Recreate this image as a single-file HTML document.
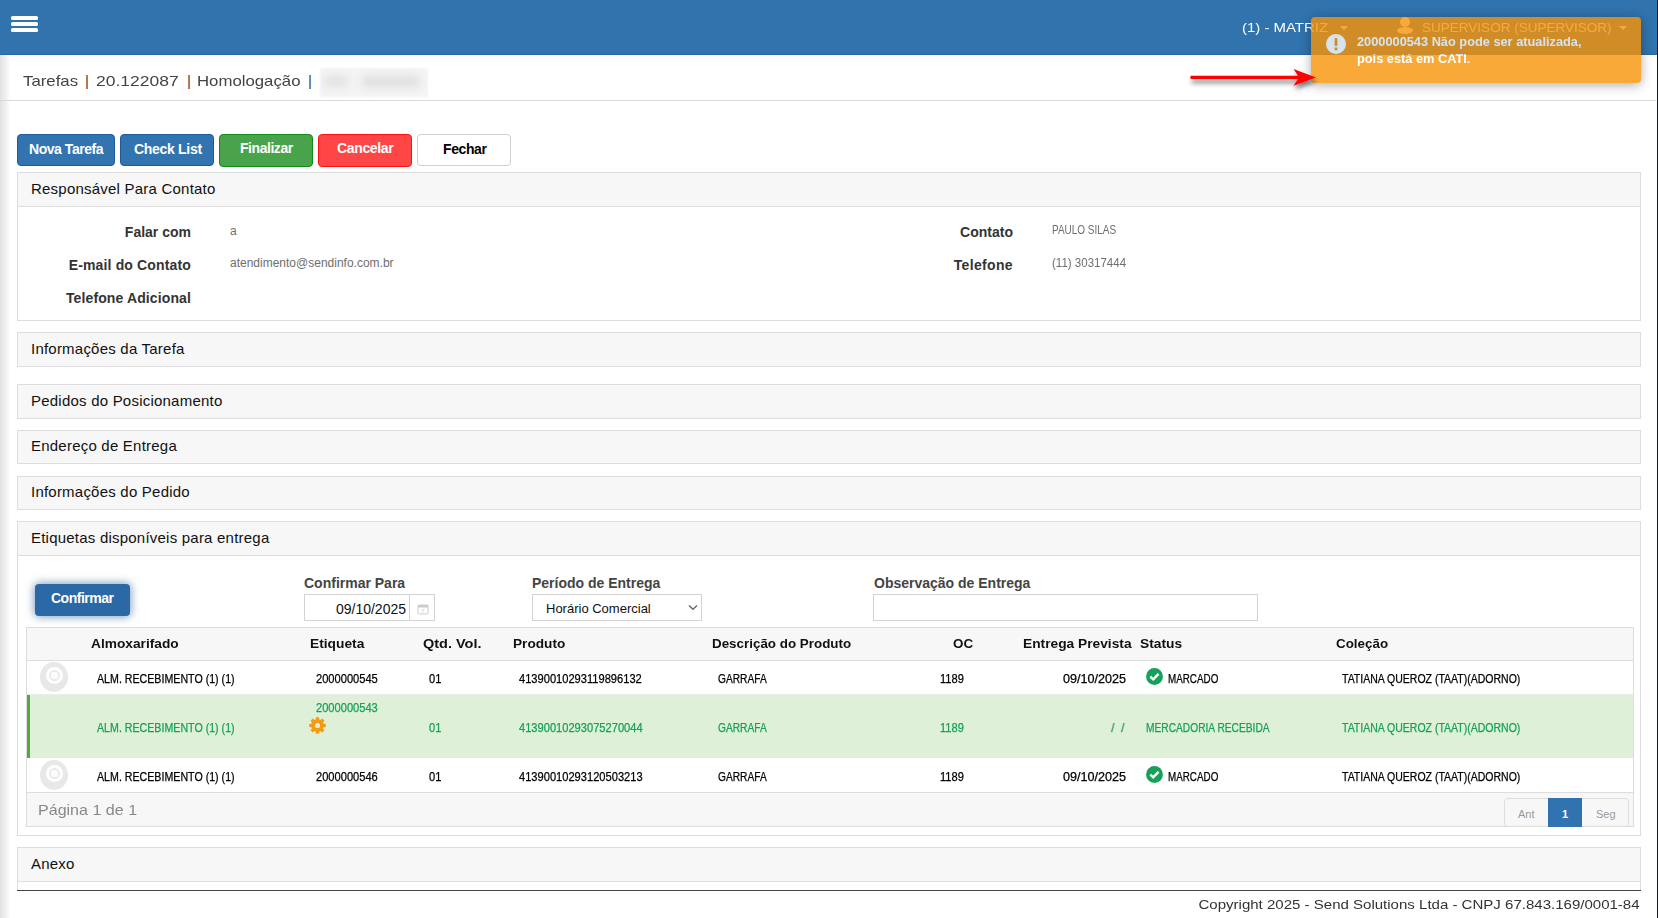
<!DOCTYPE html>
<html><head><meta charset="utf-8">
<style>
*{box-sizing:border-box;margin:0;padding:0}
html,body{width:1658px;height:918px;overflow:hidden;background:#fff;font-family:"Liberation Sans",sans-serif}
body{position:relative}
.a{position:absolute;white-space:nowrap}
.t{position:absolute;white-space:nowrap;line-height:1}
.sx{display:inline-block;transform-origin:0 0}
.sxr{display:inline-block;transform-origin:100% 0}
#hdr{left:0;top:0;width:1658px;height:55px;background:#3073ad;border-bottom:1px solid #2a66a3}
.bar{position:absolute;left:11px;width:27px;height:4px;background:#fff;border-radius:1.5px}
.btn{position:absolute;top:134px;height:32px;border-radius:4px}
.panel{position:absolute;left:17px;width:1624px;border:1px solid #ddd;background:#fff}
.ph{background:#f7f7f7;height:33px;font-size:15px;color:#111;padding-left:13px;line-height:31px;white-space:nowrap;letter-spacing:0.22px}
.lbl{font-weight:bold;font-size:14px;color:#333}
.val{font-size:12px;color:#6e6e6e}
.hd{font-weight:bold;font-size:13px;color:#111}
.td{font-size:12px;color:#000;-webkit-text-stroke:0.25px currentColor}
.gr{color:#17a05a}
.radio{position:absolute;left:40px;width:28px;height:30px;border-radius:50%;background:#e8e8e8}
.radio:before{content:"";position:absolute;left:5.5px;top:5px;width:17px;height:17px;border-radius:50%;border:3px solid #fff;box-sizing:border-box;background:#e9e9e9}
.radio:after{content:"";position:absolute;left:10.5px;top:10px;width:7px;height:7px;border-radius:2px;background:#fbfcfe}
</style></head><body>
<!-- header -->
<div id="hdr" class="a">
  <div class="bar" style="top:16px"></div>
  <div class="bar" style="top:22px"></div>
  <div class="bar" style="top:28px"></div>
  <div class="t" style="left:1242px;top:21px;font-size:13px;color:#fff"><span class="sx" style="transform:scaleX(1.15)">(1) - MATRIZ</span></div>
  <div class="a" style="left:1340px;top:26px;width:0;height:0;border-left:4px solid transparent;border-right:4px solid transparent;border-top:4px solid #fff"></div>
  <svg class="a" style="left:1396px;top:17px" width="18" height="17" viewBox="0 0 18 17"><circle cx="9" cy="5" r="5" fill="#fff"/><ellipse cx="9" cy="13.5" rx="8" ry="3.5" fill="#fff"/></svg>
  <div class="t" style="left:1422px;top:21px;font-size:13px;color:#fff"><span class="sx" style="transform:scaleX(1.04)">SUPERVISOR (SUPERVISOR)</span></div>
  <div class="a" style="left:1619px;top:26px;width:0;height:0;border-left:4px solid transparent;border-right:4px solid transparent;border-top:4px solid #fff"></div>
</div>
<div class="a" style="left:0;top:55px;width:11px;height:863px;background:linear-gradient(to right,#e2e2e2,#fff)"></div>

<!-- breadcrumb -->
<div class="t" style="left:23px;top:73px;font-size:15px;color:#444"><span class="sx" style="transform:scaleX(1.12)">Tarefas</span></div>
<div class="t" style="left:85px;top:73px;font-size:15px;color:#444">|</div>
<div class="t" style="left:96px;top:73px;font-size:15px;color:#444"><span class="sx" style="transform:scaleX(1.165)">20.122087</span></div>
<div class="t" style="left:187px;top:73px;font-size:15px;color:#444">|</div>
<div class="t" style="left:197px;top:73px;font-size:15px;color:#444"><span class="sx" style="transform:scaleX(1.118)">Homologação</span></div>
<div class="t" style="left:308px;top:73px;font-size:15px;color:#444">|</div>
<div class="a" style="left:319px;top:67px;width:110px;height:31px;overflow:hidden">
  <div class="a" style="left:1px;top:1px;width:108px;height:29px;background:#f4f4f4;filter:blur(1px)"></div>
  <div class="a" style="left:5px;top:9px;width:24px;height:11px;background:#e1e1e1;filter:blur(4px);border-radius:5px"></div>
  <div class="a" style="left:43px;top:9px;width:58px;height:11px;background:#dedede;filter:blur(4px);border-radius:5px"></div>
</div>
<div class="a" style="left:0;top:100px;width:1656px;height:1px;background:#dadada"></div>

<!-- buttons -->
<div class="btn" style="left:17px;width:98px;background:#3274b0;border:1px solid #1f5b9a"></div>
<div class="t" style="left:29px;top:142px;font-size:14px;font-weight:bold;color:#fff;letter-spacing:-0.45px">Nova Tarefa</div>
<div class="btn" style="left:120px;width:94px;background:#3274b0;border:1px solid #1f5b9a"></div>
<div class="t" style="left:134px;top:142px;font-size:14px;font-weight:bold;color:#fff;letter-spacing:-0.3px">Check List</div>
<div class="btn" style="left:219px;width:94px;height:33px;background:#48a34b;border:1px solid #128b18"></div>
<div class="t" style="left:240px;top:141px;font-size:14px;font-weight:bold;color:#fff;letter-spacing:-0.45px">Finalizar</div>
<div class="btn" style="left:318px;width:94px;height:33px;background:#ff4646;border:1px solid #ff1212"></div>
<div class="t" style="left:337px;top:141px;font-size:14px;font-weight:bold;color:#fff;letter-spacing:-0.35px">Cancelar</div>
<div class="btn" style="left:417px;width:94px;background:#fff;border:1px solid #cfcfcf"></div>
<div class="t" style="left:443px;top:142px;font-size:14px;font-weight:bold;color:#000;letter-spacing:-0.4px">Fechar</div>

<!-- panel 1 -->
<div class="panel" style="top:172px;height:149px">
  <div class="ph" style="border-bottom:1px solid #ddd;height:34px">Responsável Para Contato</div>
</div>
<div class="t lbl" style="right:1467px;top:225px">Falar com</div>
<div class="t lbl" style="right:1467px;top:258px;letter-spacing:0.15px">E-mail do Contato</div>
<div class="t lbl" style="right:1467px;top:291px;letter-spacing:0.12px">Telefone Adicional</div>
<div class="t val" style="left:230px;top:225px">a</div>
<div class="t val" style="left:230px;top:257px">atendimento@sendinfo.com.br</div>
<div class="t lbl" style="right:645px;top:225px">Contato</div>
<div class="t lbl" style="right:645px;top:258px;letter-spacing:0.35px">Telefone</div>
<div class="t val" style="left:1052px;top:224px"><span class="sx" style="transform:scaleX(0.83)">PAULO SILAS</span></div>
<div class="t val" style="left:1052px;top:257px"><span class="sx" style="transform:scaleX(0.96)">(11) 30317444</span></div>

<div class="panel" style="top:332px"><div class="ph">Informações da Tarefa</div></div>
<div class="panel" style="top:384px"><div class="ph">Pedidos do Posicionamento</div></div>
<div class="panel" style="top:430px"><div class="ph" style="height:32px;line-height:30px">Endereço de Entrega</div></div>
<div class="panel" style="top:476px"><div class="ph" style="height:32px;line-height:30px">Informações do Pedido</div></div>

<!-- panel etiquetas -->
<div class="panel" style="top:521px;height:315px">
  <div class="ph" style="border-bottom:1px solid #ddd;height:34px">Etiquetas disponíveis para entrega</div>
</div>
<div class="a" style="left:35px;top:584px;width:95px;height:32px;border-radius:4px;background:#2a68a6;box-shadow:0 0 8px 1px rgba(42,92,152,.6)"></div>
<div class="t" style="left:51px;top:591px;font-size:14px;font-weight:bold;color:#fff;letter-spacing:-0.5px">Confirmar</div>

<div class="t lbl" style="left:304px;top:576px;color:#444">Confirmar Para</div>
<div class="a" style="left:304px;top:594px;width:106px;height:27px;border:1px solid #d3d3d3;border-right:none;background:#fff"></div>
<div class="t" style="right:1252px;top:602px;font-size:14px;color:#111">09/10/2025</div>
<div class="a" style="left:409px;top:594px;width:26px;height:27px;border:1px solid #d3d3d3;background:#fff"></div>
<svg class="a" style="left:417px;top:604px" width="12" height="11" viewBox="0 0 12 11"><rect x="1" y="1" width="10" height="9" rx="1" fill="none" stroke="#ccc" stroke-width="1"/><rect x="1" y="1" width="10" height="2.5" fill="#ccc"/><text x="6" y="9" font-size="6" text-anchor="middle" fill="#ccc" font-family="Liberation Sans">7</text></svg>

<div class="t lbl" style="left:532px;top:576px;color:#444">Período de Entrega</div>
<div class="a" style="left:532px;top:594px;width:170px;height:27px;border:1px solid #d3d3d3;background:#fff"></div>
<div class="t" style="left:546px;top:602px;font-size:13px;color:#111">Horário Comercial</div>
<svg class="a" style="left:688px;top:604px" width="10" height="7" viewBox="0 0 10 7"><path d="M1 1.5 L5 5.2 L9 1.5" fill="none" stroke="#666" stroke-width="1.4"/></svg>

<div class="t lbl" style="left:874px;top:576px;color:#444">Observação de Entrega</div>
<div class="a" style="left:873px;top:594px;width:385px;height:27px;border:1px solid #d3d3d3;background:#fff"></div>

<!-- table -->
<div class="a" style="left:26px;top:627px;width:1608px;height:200px;border:1px solid #ddd;background:#fff"></div>
<div class="a" style="left:27px;top:628px;width:1606px;height:32px;background:#f7f7f7;border-bottom:1px solid #ddd;box-sizing:content-box"></div>
<div class="t hd" style="left:91px;top:637px"><span class="sx" style="transform:scaleX(1.055)">Almoxarifado</span></div>
<div class="t hd" style="left:310px;top:637px"><span class="sx" style="transform:scaleX(1.06)">Etiqueta</span></div>
<div class="t hd" style="left:423px;top:637px"><span class="sx" style="transform:scaleX(1.115)">Qtd. Vol.</span></div>
<div class="t hd" style="left:513px;top:637px"><span class="sx" style="transform:scaleX(1.05)">Produto</span></div>
<div class="t hd" style="left:712px;top:637px"><span class="sx" style="transform:scaleX(1.03)">Descrição do Produto</span></div>
<div class="t hd" style="left:953px;top:637px"><span class="sx" style="transform:scaleX(1.03)">OC</span></div>
<div class="t hd" style="left:1023px;top:637px"><span class="sx" style="transform:scaleX(1.058)">Entrega Prevista</span></div>
<div class="t hd" style="left:1140px;top:637px"><span class="sx" style="transform:scaleX(1.06)">Status</span></div>
<div class="t hd" style="left:1336px;top:637px"><span class="sx" style="transform:scaleX(1.03)">Coleção</span></div>

<!-- row1 -->
<div class="radio" style="top:662px"></div>
<div class="t td" style="left:97px;top:673px"><span class="sx" style="transform:scaleX(0.887)">ALM. RECEBIMENTO (1) (1)</span></div>
<div class="t td" style="left:316px;top:673px"><span class="sx" style="transform:scaleX(0.926)">2000000545</span></div>
<div class="t td" style="left:429px;top:673px"><span class="sx" style="transform:scaleX(0.926)">01</span></div>
<div class="t td" style="left:519px;top:673px"><span class="sx" style="transform:scaleX(0.926)">41390010293119896132</span></div>
<div class="t td" style="left:718px;top:673px"><span class="sx" style="transform:scaleX(0.85)">GARRAFA</span></div>
<div class="t td" style="left:940px;top:673px"><span class="sx" style="transform:scaleX(0.926)">1189</span></div>
<div class="t td" style="right:532px;top:673px"><span class="sxr" style="transform:scaleX(1.05)">09/10/2025</span></div>
<svg class="a" style="left:1146px;top:668px" width="17" height="17" viewBox="0 0 17 17"><circle cx="8.5" cy="8.5" r="8.4" fill="#17a05a"/><path d="M4.3 8.6 L7.2 11.4 L12.6 5.8" fill="none" stroke="#fff" stroke-width="2.4"/></svg>
<div class="t td" style="left:1168px;top:673px"><span class="sx" style="transform:scaleX(0.82)">MARCADO</span></div>
<div class="t td" style="left:1342px;top:673px"><span class="sx" style="transform:scaleX(0.875)">TATIANA QUEROZ (TAAT)(ADORNO)</span></div>

<!-- row2 green -->
<div class="a" style="left:27px;top:694px;width:1606px;height:64px;background:#dff0d8;border-top:1px solid #e8efe6"></div>
<div class="a" style="left:27px;top:695px;width:3px;height:63px;background:#55a83e"></div>
<div class="t td gr" style="left:316px;top:702px"><span class="sx" style="transform:scaleX(0.926)">2000000543</span></div>
<svg class="a" style="left:309px;top:717px" width="17" height="17" viewBox="-8.5 -8.5 17 17"><g fill="#f39c12"><circle r="6.3"/><path d="M-1.6 -8.3 H1.6 L1.9 -5 H-1.9 Z" id="tooth"/><use href="#tooth" transform="rotate(45)"/><use href="#tooth" transform="rotate(90)"/><use href="#tooth" transform="rotate(135)"/><use href="#tooth" transform="rotate(180)"/><use href="#tooth" transform="rotate(225)"/><use href="#tooth" transform="rotate(270)"/><use href="#tooth" transform="rotate(315)"/></g><circle r="2.6" fill="#dff0d8"/></svg>
<div class="t td gr" style="left:97px;top:722px"><span class="sx" style="transform:scaleX(0.887)">ALM. RECEBIMENTO (1) (1)</span></div>
<div class="t td gr" style="left:429px;top:722px"><span class="sx" style="transform:scaleX(0.926)">01</span></div>
<div class="t td gr" style="left:519px;top:722px"><span class="sx" style="transform:scaleX(0.926)">41390010293075270044</span></div>
<div class="t td gr" style="left:718px;top:722px"><span class="sx" style="transform:scaleX(0.85)">GARRAFA</span></div>
<div class="t td gr" style="left:940px;top:722px"><span class="sx" style="transform:scaleX(0.926)">1189</span></div>
<div class="t td gr" style="left:1111px;top:722px">/</div><div class="t td gr" style="left:1121px;top:722px">/</div>
<div class="t td gr" style="left:1146px;top:722px"><span class="sx" style="transform:scaleX(0.85)">MERCADORIA RECEBIDA</span></div>
<div class="t td gr" style="left:1342px;top:722px"><span class="sx" style="transform:scaleX(0.875)">TATIANA QUEROZ (TAAT)(ADORNO)</span></div>

<!-- row3 -->
<div class="radio" style="top:760px"></div>
<div class="t td" style="left:97px;top:771px"><span class="sx" style="transform:scaleX(0.887)">ALM. RECEBIMENTO (1) (1)</span></div>
<div class="t td" style="left:316px;top:771px"><span class="sx" style="transform:scaleX(0.926)">2000000546</span></div>
<div class="t td" style="left:429px;top:771px"><span class="sx" style="transform:scaleX(0.926)">01</span></div>
<div class="t td" style="left:519px;top:771px"><span class="sx" style="transform:scaleX(0.926)">41390010293120503213</span></div>
<div class="t td" style="left:718px;top:771px"><span class="sx" style="transform:scaleX(0.85)">GARRAFA</span></div>
<div class="t td" style="left:940px;top:771px"><span class="sx" style="transform:scaleX(0.926)">1189</span></div>
<div class="t td" style="right:532px;top:771px"><span class="sxr" style="transform:scaleX(1.05)">09/10/2025</span></div>
<svg class="a" style="left:1146px;top:766px" width="17" height="17" viewBox="0 0 17 17"><circle cx="8.5" cy="8.5" r="8.4" fill="#17a05a"/><path d="M4.3 8.6 L7.2 11.4 L12.6 5.8" fill="none" stroke="#fff" stroke-width="2.4"/></svg>
<div class="t td" style="left:1168px;top:771px"><span class="sx" style="transform:scaleX(0.82)">MARCADO</span></div>
<div class="t td" style="left:1342px;top:771px"><span class="sx" style="transform:scaleX(0.875)">TATIANA QUEROZ (TAAT)(ADORNO)</span></div>

<!-- table footer -->
<div class="a" style="left:27px;top:792px;width:1606px;height:34px;background:#f7f7f7;border-top:1px solid #ddd"></div>
<div class="t" style="left:38px;top:802px;font-size:15px;color:#888"><span class="sx" style="transform:scaleX(1.07)">Página 1 de 1</span></div>
<div class="a" style="left:1504px;top:798px;width:125px;height:29px;border:1px solid #ddd;border-radius:4px;background:#f7f7f7"></div>
<div class="a" style="left:1548px;top:798px;width:34px;height:29px;background:#3172b0"></div>
<div class="t" style="left:1518px;top:809px;font-size:11px;color:#999">Ant</div>
<div class="t" style="left:1562px;top:809px;font-size:11px;color:#fff;font-weight:bold">1</div>
<div class="t" style="left:1596px;top:809px;font-size:11px;color:#999">Seg</div>

<!-- anexo -->
<div class="panel" style="top:847px;height:44px">
  <div class="ph" style="border-bottom:1px solid #ddd;height:34px">Anexo</div>
</div>

<!-- footer -->
<div class="a" style="left:17px;top:890px;width:1624px;height:1px;background:#444"></div>
<div class="t" style="right:18px;top:898px;font-size:13px;color:#333"><span class="sxr" style="transform:scaleX(1.156)">Copyright 2025 - Send Solutions Ltda - CNPJ 67.843.169/0001-84</span></div>

<!-- toast -->
<div class="a" style="left:1311px;top:17px;width:330px;height:66px;border-radius:4px;background:#f89406;opacity:.8;box-shadow:0 2px 12px rgba(0,0,0,.42)">
  <svg class="a" style="left:15px;top:17px" width="20" height="20" viewBox="0 0 20 20"><circle cx="10" cy="10" r="10" fill="#fff"/><rect x="8.6" y="4" width="2.8" height="8" rx="0.8" fill="#f89406"/><rect x="8.6" y="13.5" width="2.8" height="2.8" fill="#f89406"/></svg>
  <div class="t" style="left:46px;top:19px;font-size:12px;font-weight:bold;color:#fff"><span class="sx" style="transform:scaleX(1.065)">2000000543 Não pode ser atualizada,</span></div>
  <div class="t" style="left:46px;top:36px;font-size:12px;font-weight:bold;color:#fff"><span class="sx" style="transform:scaleX(1.065)">pois está em CATI.</span></div>
</div>

<!-- red arrow -->
<svg class="a" style="left:1180px;top:60px" width="140" height="40" viewBox="0 0 140 40">
  <defs><filter id="sh" x="-20%" y="-50%" width="140%" height="200%"><feGaussianBlur in="SourceAlpha" stdDeviation="2.5"/><feOffset dy="4" dx="1"/><feComponentTransfer><feFuncA type="linear" slope="0.55"/></feComponentTransfer><feMerge><feMergeNode/><feMergeNode in="SourceGraphic"/></feMerge></filter></defs>
  <g filter="url(#sh)"><path d="M11 15.8 L118 15.8 L113.5 9 L136 17.4 L113.5 25.8 L118 19 L11 19 Q9.5 17.4 11 15.8 Z" fill="#fe0000"/></g>
</svg>

<div class="a" style="left:1657px;top:0;width:1px;height:918px;background:#12151f"></div>
</body></html>
